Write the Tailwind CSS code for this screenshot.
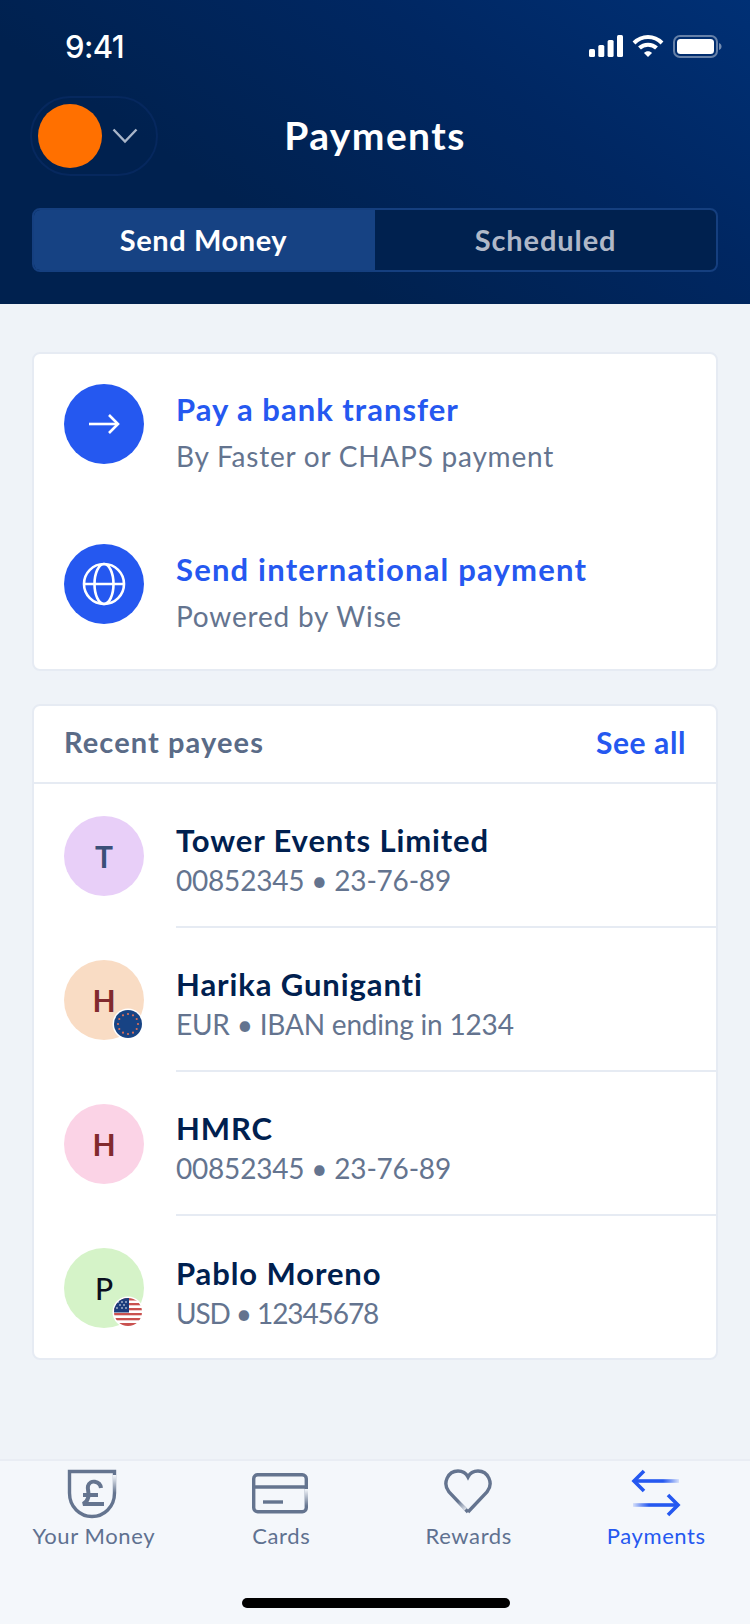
<!DOCTYPE html>
<html><head><meta charset="utf-8"><script src="https://cdn.jsdelivr.net/npm/@tailwindcss/browser@4"></script></head>
<body class="m-0">
<div class="w-[750px] h-[1624px] flex flex-col bg-[#eff3f8] font-['Lato','Liberation_Sans',sans-serif] overflow-hidden">
  <header class="h-[304px] shrink-0 bg-[linear-gradient(215deg,#003075_0%,#002762_32%,#00214f_68%)] pt-[28px] px-[32px]">
    <div class="h-[36px] flex items-center justify-between pl-[33px]">
      <span class="text-white text-[31px] font-medium font-['Inter',sans-serif] tracking-[-0.6px] leading-none">9:41</span>
      <div class="flex items-center gap-[9px] -mr-[4px]">
        <svg width="34" height="22" viewBox="0 0 34 22" fill="#fff"><rect x="0" y="14" width="6" height="8" rx="1.5"/><rect x="9.3" y="10" width="6" height="12" rx="1.5"/><rect x="18.6" y="5" width="6" height="17" rx="1.5"/><rect x="28" y="0" width="6" height="22" rx="1.5"/></svg>
        <svg width="32" height="22" viewBox="0 0 32 22" fill="none" stroke="#fff" stroke-width="4"><path d="M2 8 C 10 0, 22 0, 30 8"/><path d="M7.5 13 C 12 8.5, 20 8.5, 24.5 13"/><path d="M12 18 L16 22 L20 18 C 18 15.5, 14 15.5, 12 18Z" fill="#fff" stroke="none"/></svg>
        <svg width="49" height="23" viewBox="0 0 49 23" fill="none"><rect x="1" y="1" width="43" height="21" rx="6" stroke="#fff" stroke-opacity=".4" stroke-width="2"/><rect x="4" y="4" width="37" height="15" rx="3.5" fill="#fff"/><path d="M46 8 C48 9, 48.5 10, 48.5 11.5 C48.5 13, 48 14, 46 15Z" fill="#fff" fill-opacity=".45"/></svg>
      </div>
    </div>
    <div class="relative h-[80px] mt-[33px] -ml-[2px] flex items-center justify-center">
      <div class="absolute left-0 -top-[1px] w-[128px] h-[80px] rounded-full border-2 border-[#06285e] flex items-center pl-[6px] gap-[10px]">
        <span class="w-[64px] h-[64px] rounded-full bg-[#ff7000] shrink-0"></span>
        <svg width="26" height="16" viewBox="0 0 26 16" fill="none" stroke="#a9b6c9" stroke-width="2.4"><path d="M1.5 1.5 L13 13.5 L24.5 1.5"/></svg>
      </div>
      <h1 class="m-0 ml-[2px] -mt-[3px] text-white text-[39px] font-bold leading-none tracking-[1.4px]">Payments</h1>
    </div>
    <div class="mt-[31px] h-[64px] w-[686px] rounded-[8px] border-2 border-[#153f7f] bg-[#00214f] grid grid-cols-2 overflow-hidden">
      <div class="-m-[2px] mr-0 bg-[#164283] flex items-center justify-center text-white text-[29px] font-bold tracking-[0.6px] rounded-l-[8px]">Send Money</div>
      <div class="flex items-center justify-center text-[#b0b8c8] text-[29px] font-bold tracking-[0.9px]">Scheduled</div>
    </div>
  </header>

  <main class="flex-1 px-[32px] pt-[48px]">
    <section class="h-[319px] bg-white rounded-[8px] border-2 border-[#e6ebf3] flex flex-col pt-[30px] pl-[30px]">
      <div class="h-[80px] flex items-center gap-[32px]">
        <span class="w-[80px] h-[80px] rounded-full bg-[#2558f0] flex items-center justify-center shrink-0">
          <svg width="32" height="20" viewBox="0 0 32 20" fill="none" stroke="#fff" stroke-width="2.6"><path d="M1 10 H30"/><path d="M21 1 L30 10 L21 19"/></svg>
        </span>
        <div class="flex flex-col pt-[15px]">
          <span class="text-[#2558f0] text-[31px] font-bold leading-[36px] tracking-[1px]">Pay a bank transfer</span>
          <span class="text-[#64748f] text-[28px] leading-[34px] mt-[12px] tracking-[0.77px]">By Faster or CHAPS payment</span>
        </div>
      </div>
      <div class="h-[80px] mt-[80px] flex items-center gap-[32px]">
        <span class="w-[80px] h-[80px] rounded-full bg-[#2558f0] flex items-center justify-center shrink-0">
          <svg width="44" height="44" viewBox="0 0 44 44" fill="none" stroke="#fff" stroke-width="2.6"><circle cx="22" cy="22" r="20"/><ellipse cx="22" cy="22" rx="9.5" ry="20"/><path d="M2 22 H42"/></svg>
        </span>
        <div class="flex flex-col pt-[15px]">
          <span class="text-[#2558f0] text-[31px] font-bold leading-[36px] tracking-[1.2px]">Send international payment</span>
          <span class="text-[#64748f] text-[28px] leading-[34px] mt-[12px] tracking-[0.8px]">Powered by Wise</span>
        </div>
      </div>
    </section>

    <section class="mt-[33px] h-[656px] bg-white rounded-[8px] border-2 border-[#e6ebf3]">
      <div class="h-[78px] border-b-2 border-[#e6ebf3] flex items-center justify-between px-[30px] pb-[4px]">
        <span class="text-[#5a6b87] text-[29px] font-bold tracking-[1.1px]">Recent payees</span>
        <span class="text-[#2558f0] text-[30px] font-bold tracking-[0.6px]">See all</span>
      </div>
      <div class="flex flex-col pl-[30px]">
        <div class="h-[144px] flex items-center gap-[32px]">
          <span class="w-[80px] h-[80px] rounded-full bg-[#e8cff8] flex items-center justify-center text-[#3b5078] text-[30px] font-bold shrink-0">T</span>
          <div class="flex-1 h-full flex flex-col justify-center border-b-2 border-[#e6ebf3] pt-[8px]">
            <span class="text-[#00204f] text-[31px] font-bold leading-[38px] tracking-[0.9px]">Tower Events Limited</span>
            <span class="text-[#64748f] text-[28px] leading-[34px] mt-[4px] tracking-[-0.2px]">00852345 • 23-76-89</span>
          </div>
        </div>
        <div class="h-[144px] flex items-center gap-[32px]">
          <span class="relative w-[80px] h-[80px] rounded-full bg-[#f9dcc4] flex items-center justify-center text-[#822a2e] text-[30px] font-bold shrink-0">H
            <svg class="absolute left-[48px] top-[48px]" width="32" height="32" viewBox="0 0 32 32"><circle cx="16" cy="16" r="15.5" fill="#fff"/><circle cx="16" cy="16" r="14" fill="#174384"/><g fill="#d9705a"><circle cx="16" cy="6" r="1.1"/><circle cx="21" cy="7.3" r="1.1"/><circle cx="24.7" cy="11" r="1.1"/><circle cx="26" cy="16" r="1.1"/><circle cx="24.7" cy="21" r="1.1"/><circle cx="21" cy="24.7" r="1.1"/><circle cx="16" cy="26" r="1.1"/><circle cx="11" cy="24.7" r="1.1"/><circle cx="7.3" cy="21" r="1.1"/><circle cx="6" cy="16" r="1.1"/><circle cx="7.3" cy="11" r="1.1"/><circle cx="11" cy="7.3" r="1.1"/></g></svg>
          </span>
          <div class="flex-1 h-full flex flex-col justify-center border-b-2 border-[#e6ebf3] pt-[8px]">
            <span class="text-[#00204f] text-[31px] font-bold leading-[38px] tracking-[0.9px]">Harika Guniganti</span>
            <span class="text-[#64748f] text-[28px] leading-[34px] mt-[4px] tracking-[-0.2px]">EUR • IBAN ending in 1234</span>
          </div>
        </div>
        <div class="h-[144px] flex items-center gap-[32px]">
          <span class="w-[80px] h-[80px] rounded-full bg-[#fbd3e6] flex items-center justify-center text-[#822a2e] text-[30px] font-bold shrink-0">H</span>
          <div class="flex-1 h-full flex flex-col justify-center border-b-2 border-[#e6ebf3] pt-[8px]">
            <span class="text-[#00204f] text-[31px] font-bold leading-[38px] tracking-[0.9px]">HMRC</span>
            <span class="text-[#64748f] text-[28px] leading-[34px] mt-[4px] tracking-[-0.2px]">00852345 • 23-76-89</span>
          </div>
        </div>
        <div class="h-[144px] flex items-center gap-[32px]">
          <span class="relative w-[80px] h-[80px] rounded-full bg-[#d5f3c8] flex items-center justify-center text-[#0a0f1e] text-[30px] font-medium shrink-0">P
            <svg class="absolute left-[48px] top-[48px]" width="32" height="32" viewBox="0 0 32 32"><circle cx="16" cy="16" r="15.5" fill="#fff"/><clipPath id="f"><circle cx="16" cy="16" r="14"/></clipPath><g clip-path="url(#f)"><rect x="2" y="2" width="28" height="28" fill="#fff"/><g fill="#c9514f"><rect x="2" y="2" width="28" height="2.5"/><rect x="2" y="7" width="28" height="2.3"/><rect x="2" y="12" width="28" height="2.3"/><rect x="2" y="17" width="28" height="2.3"/><rect x="2" y="22" width="28" height="2.3"/><rect x="2" y="27" width="28" height="3"/></g><rect x="2" y="2" width="15" height="14.5" fill="#1c3c7c"/><g fill="#fff"><circle cx="6" cy="6" r=".8"/><circle cx="10" cy="6" r=".8"/><circle cx="14" cy="6" r=".8"/><circle cx="8" cy="9" r=".8"/><circle cx="12" cy="9" r=".8"/><circle cx="5" cy="12" r=".8"/><circle cx="10" cy="12" r=".8"/><circle cx="14" cy="12" r=".8"/></g></g></svg>
          </span>
          <div class="flex-1 h-full flex flex-col justify-center pt-[8px]">
            <span class="text-[#00204f] text-[31px] font-bold leading-[38px] tracking-[0.9px]">Pablo Moreno</span>
            <span class="text-[#64748f] text-[28px] leading-[34px] mt-[4px] tracking-[-1.1px]">USD • 12345678</span>
          </div>
        </div>
      </div>
    </section>
  </main>

  <nav class="relative h-[165px] shrink-0 bg-[#f4f7fb] border-t-2 border-[#e9edf4] grid grid-cols-4 pt-[8px]">
    <div class="flex flex-col items-center text-[#5f7190] text-[22px] tracking-[0.6px]">
      <svg class="h-[50px] -ml-[3px]" width="50" height="50" viewBox="0 0 50 50" fill="none" stroke="#64748f" stroke-width="3.4"><defs><linearGradient id="s1" x1="0" y1="6" x2="0" y2="24" gradientUnits="userSpaceOnUse"><stop offset="0" stop-color="#f4f7fb"/><stop offset="1" stop-color="#f4f7fb" stop-opacity="0"/></linearGradient></defs><path d="M2.5 2.5 H47.5 V24 C47.5 38, 37 47.5, 25 47.5 C13 47.5, 2.5 38, 2.5 24Z"/><path d="M47.5 6 V24" stroke="url(#s1)" stroke-width="3.6"/><path d="M34 19 C33 12, 23 10, 21 17 C20 21, 23 25, 21 29 C20 33, 18 34, 16 35 H37 M16 26 H31" stroke-width="4"/></svg>
      <span class="leading-[28px] mt-[3px]">Your Money</span>
    </div>
    <div class="flex flex-col items-center text-[#5f7190] text-[22px] tracking-[0.6px]">
      <svg class="h-[50px] -ml-[2px]" width="56" height="50" viewBox="0 0 56 50" fill="none" stroke="#64748f" stroke-width="3.4"><defs><linearGradient id="s2" x1="0" y1="20" x2="0" y2="37" gradientUnits="userSpaceOnUse"><stop offset="0" stop-color="#f4f7fb"/><stop offset="1" stop-color="#f4f7fb" stop-opacity="0"/></linearGradient></defs><rect x="1.7" y="5.7" width="52.6" height="37" rx="4"/><path d="M1.7 18 H54.3"/><path d="M11 33 H31"/><path d="M54.3 20 V37" stroke="url(#s2)" stroke-width="3.6"/></svg>
      <span class="leading-[28px] mt-[3px]">Cards</span>
    </div>
    <div class="flex flex-col items-center text-[#5f7190] text-[22px] tracking-[0.6px]">
      <svg class="h-[50px] -ml-[2px]" width="50" height="50" viewBox="0 0 50 50" fill="none" stroke="#64748f" stroke-width="3.4"><defs><linearGradient id="s3" x1="22" y1="44" x2="13" y2="34" gradientUnits="userSpaceOnUse"><stop offset="0" stop-color="#f4f7fb"/><stop offset="1" stop-color="#f4f7fb" stop-opacity="0"/></linearGradient></defs><path d="M25 43 L6 23 C-1 14, 5 2, 15 2 C20 2, 23 4, 25 8 C27 4, 30 2, 35 2 C45 2, 51 14, 44 23 L25 43"/><path d="M22.5 40.5 L13 30.5" stroke="url(#s3)" stroke-width="3.6"/></svg>
      <span class="leading-[28px] mt-[3px]">Rewards</span>
    </div>
    <div class="flex flex-col items-center text-[#2558f0] text-[22px] tracking-[0.6px]">
      <svg class="h-[50px]" width="50" height="50" viewBox="0 0 50 50" fill="none" stroke="#2558f0" stroke-width="3.6"><defs><linearGradient id="s4" x1="32" y1="0" x2="48" y2="0" gradientUnits="userSpaceOnUse"><stop offset="0" stop-color="#2558f0"/><stop offset=".5" stop-color="#2558f0" stop-opacity=".6"/><stop offset="1" stop-color="#2558f0" stop-opacity=".15"/></linearGradient><linearGradient id="s5" x1="18" y1="0" x2="2" y2="0" gradientUnits="userSpaceOnUse"><stop offset="0" stop-color="#2558f0"/><stop offset=".5" stop-color="#2558f0" stop-opacity=".6"/><stop offset="1" stop-color="#2558f0" stop-opacity=".15"/></linearGradient></defs><path d="M3 12 H32"/><path d="M32 12 H48" stroke="url(#s4)"/><path d="M13 2 L3 12 L13 22"/><path d="M47 36 H18"/><path d="M18 36 H2" stroke="url(#s5)"/><path d="M37 26 L47 36 L37 46"/></svg>
      <span class="leading-[28px] mt-[3px]">Payments</span>
    </div>
    <div class="absolute left-[242px] bottom-[16px] w-[268px] h-[10px] rounded-full bg-black"></div>
  </nav>
</div>
</body></html>
